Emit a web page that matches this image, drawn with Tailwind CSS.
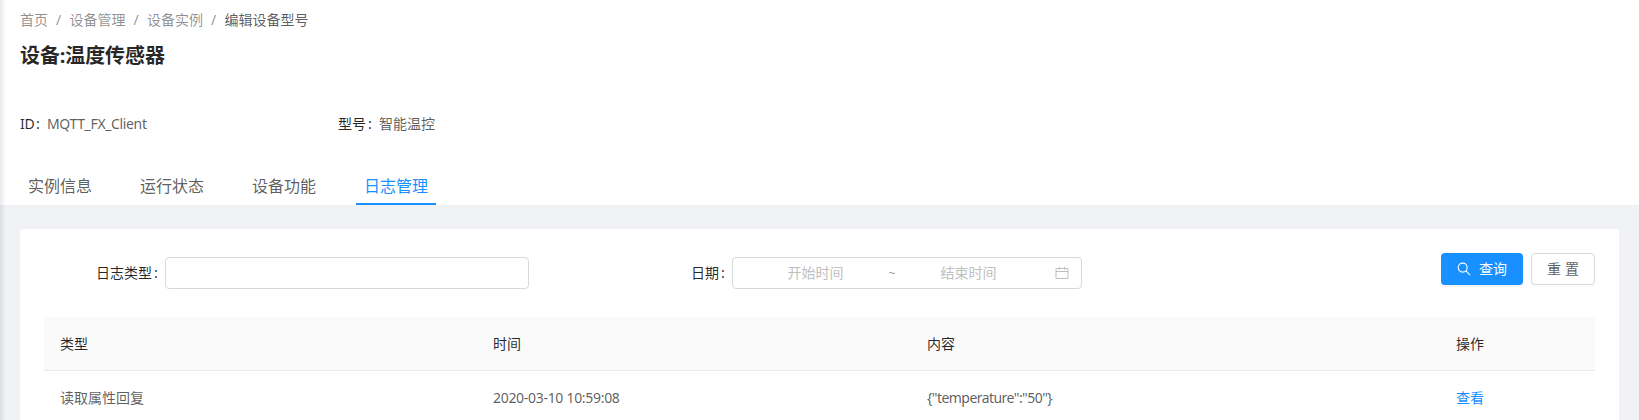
<!DOCTYPE html>
<html lang="zh-CN">
<head>
<meta charset="utf-8">
<title>设备实例</title>
<script src="https://cdn.jsdelivr.net/npm/@tailwindcss/browser@4"></script>
</head>
<body class="relative h-[420px] overflow-hidden bg-[#f0f2f5] font-['Noto_Sans','Noto_Sans_CJK_SC',sans-serif] text-sm text-black/65">
<div class="absolute inset-y-0 left-0 z-10 w-1.5 bg-linear-to-r from-[#001529]/9 to-transparent"></div>

<header class="flex h-[205px] flex-col bg-white px-5">
  <nav class="mt-2 flex h-6 items-center gap-2 text-black/45">
    <a>首页</a><span class="w-[5.5px]">/</span><a>设备管理</a><span class="w-[5.5px]">/</span><a>设备实例</a><span class="w-[5.5px]">/</span><span class="text-black/65">编辑设备型号</span>
  </nav>
  <h1 class="mt-2 h-8 text-xl leading-8 font-bold tracking-[-0.1px] text-black/85">设备:温度传感器</h1>
  <div class="mt-[41px] flex h-[22px] leading-[22px]">
    <div class="flex w-[318px]"><span class="w-3.5 tracking-[-0.3px] text-black/85">ID</span><span class="mr-[7px] ml-0.5 w-1 text-black/85">:</span><span class="tracking-[-0.36px]">MQTT_FX_Client</span></div>
    <div class="flex"><span class="text-black/85">型号</span><span class="mr-[7px] ml-0.5 w-1 text-black/85">:</span><span>智能温控</span></div>
  </div>
  <div class="mt-auto flex h-[38px] gap-8 text-base leading-[38px]">
    <div class="w-20 text-center">实例信息</div>
    <div class="w-20 text-center">运行状态</div>
    <div class="w-20 text-center">设备功能</div>
    <div class="w-20 border-b-2 border-[#1890ff] text-center text-[#1890ff]">日志管理</div>
  </div>
</header>

<main class="mx-5 mt-6 h-[191px] overflow-hidden rounded-t-xs bg-white px-6 pt-6">
  <form class="flex h-16 items-start">
    <label class="mt-1 flex h-8 w-[121px] items-center justify-end text-black/85">日志类型<span class="mr-2 ml-0.5 w-[3px]">:</span></label>
    <input class="mt-1 h-8 w-[364px] rounded border border-[#d9d9d9] bg-white px-3">
    <label class="mt-1 flex h-8 w-[203px] items-center justify-end text-black/85">日期<span class="mr-2 ml-0.5 w-[3px]">:</span></label>
    <div class="mt-1 flex h-8 w-[350px] items-center rounded border border-[#d9d9d9] pr-3 pl-[11px] text-[#bfbfbf]">
      <span class="w-[143px] text-center">开始时间</span>
      <span class="w-2.5 pt-0.5 text-center text-xs text-black/45">~</span>
      <span class="w-[143px] text-center">结束时间</span>
      <svg class="ml-auto size-3.5" viewBox="0 0 14 14" fill="none" stroke="#bfbfbf"><path d="M1 2.5h12v10H1zM1 5.5h12M4.5.8v3M9.5.8v3"/></svg>
    </div>
    <div class="ml-auto flex gap-2">
      <button type="button" class="flex h-8 w-[82px] items-center gap-2 rounded bg-[#1890ff] pl-4 text-white shadow-[0_2px_0_rgba(0,0,0,0.045)]">
        <svg class="size-3.5" viewBox="0 0 14 14" fill="none" stroke="currentColor" stroke-width="1.1"><circle cx="5.7" cy="5.6" r="4.5"/><path d="m8.9 8.9 4.3 4.3"/></svg>
        <span>查询</span>
      </button>
      <button type="button" class="flex h-8 w-16 items-center justify-center gap-1 rounded border border-[#d9d9d9] bg-white shadow-[0_2px_0_rgba(0,0,0,0.015)]"><span>重</span><span>置</span></button>
    </div>
  </form>
  <div class="grid h-[54px] grid-cols-[433px_434px_529px_1fr] items-center rounded-t border-b border-[#e8e8e8] bg-[#fafafa] text-black/85 *:px-4">
    <div>类型</div><div>时间</div><div>内容</div><div>操作</div>
  </div>
  <div class="grid h-[54px] grid-cols-[433px_434px_529px_1fr] items-center *:px-4">
    <div>读取属性回复</div><div class="tracking-[-0.3px]">2020-03-10 10:59:08</div><div class="tracking-[-0.55px]">{"temperature":"50"}</div><div><a class="text-[#1890ff]">查看</a></div>
  </div>
</main>
</body>
</html>
